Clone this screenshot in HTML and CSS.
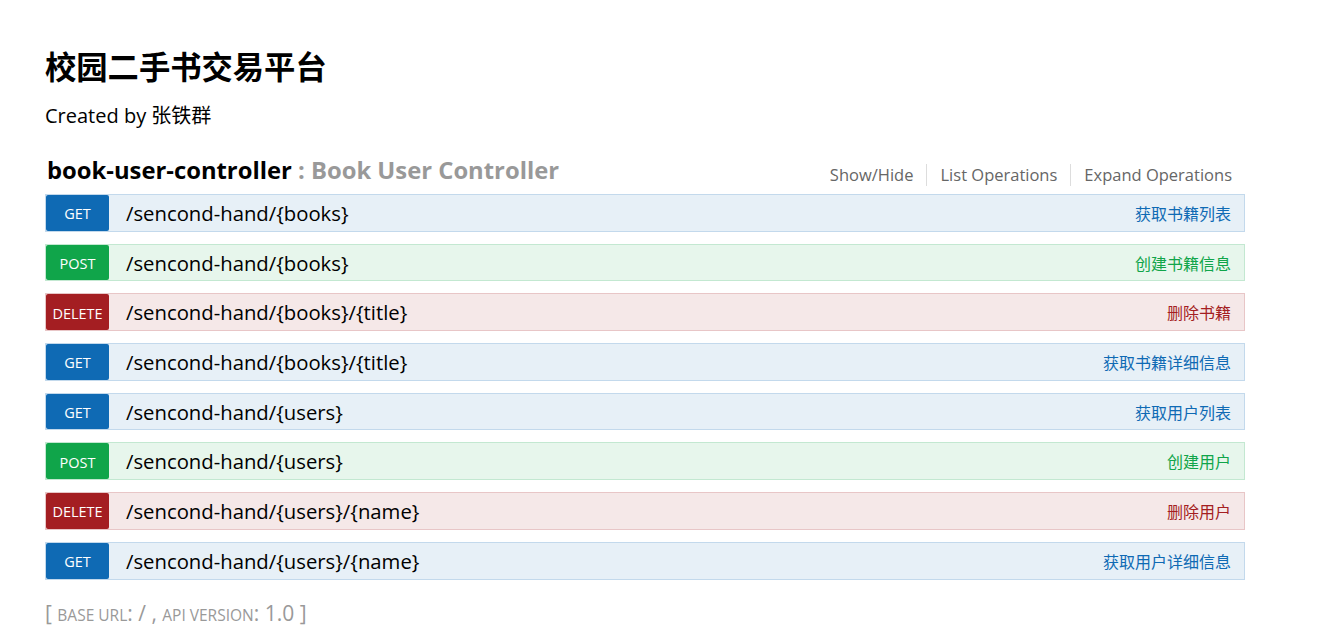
FILE: index.html
```html
<!DOCTYPE html>
<html lang="zh-CN">
<head>
<meta charset="utf-8">
<title>校园二手书交易平台</title>
<link rel="stylesheet" href="styles.css">
</head>
<body>
<div class="page">
  <div class="info">
    <h1 class="title">校园二手书交易平台</h1>
    <div class="created">Created by 张铁群</div>
  </div>
  <div class="resource">
    <div class="res-head">
      <h2 class="res-name">book-user-controller<span class="res-desc"> : Book User Controller</span></h2>
      <ul class="res-links">
        <li>Show/Hide</li>
        <li>List Operations</li>
        <li>Expand Operations</li>
      </ul>
    </div>
    <ul class="ops">
      <li class="op get"><span class="verb">GET</span><span class="path">/sencond-hand/{books}</span><span class="summary">获取书籍列表</span></li>
      <li class="op post"><span class="verb">POST</span><span class="path">/sencond-hand/{books}</span><span class="summary">创建书籍信息</span></li>
      <li class="op delete"><span class="verb">DELETE</span><span class="path">/sencond-hand/{books}/{title}</span><span class="summary">删除书籍</span></li>
      <li class="op get"><span class="verb">GET</span><span class="path">/sencond-hand/{books}/{title}</span><span class="summary">获取书籍详细信息</span></li>
      <li class="op get"><span class="verb">GET</span><span class="path">/sencond-hand/{users}</span><span class="summary">获取用户列表</span></li>
      <li class="op post"><span class="verb">POST</span><span class="path">/sencond-hand/{users}</span><span class="summary">创建用户</span></li>
      <li class="op delete"><span class="verb">DELETE</span><span class="path">/sencond-hand/{users}/{name}</span><span class="summary">删除用户</span></li>
      <li class="op get"><span class="verb">GET</span><span class="path">/sencond-hand/{users}/{name}</span><span class="summary">获取用户详细信息</span></li>
    </ul>
  </div>
  <div class="footer">[ <span class="sc">Base URL</span>: / , <span class="sc">Api Version</span>: 1.0 ]</div>
</div>
</body>
</html>
```

FILE: styles.css
```css
* { box-sizing: border-box; }
body {
  margin: 0;
  background: #fff;
  font-family: "Open Sans", "Noto Sans CJK SC", sans-serif;
  color: #000;
}
.page {
  width: 1200px;
  margin-left: 45px;
  padding-top: 42px;
}
.title {
  margin: 0;
  font-size: 31.3px;
  font-weight: bold;
  line-height: 48px;
  font-family: "Noto Sans CJK SC", sans-serif;
}
.created {
  margin-top: 11px;
  font-size: 20px;
  line-height: 30px;
}
.resource { margin-top: 21px; }
.res-head {
  display: flex;
  justify-content: space-between;
  align-items: flex-end;
  height: 42px;
  padding-bottom: 8px;
}
.res-name {
  margin: 0 0 0 2px;
  font-size: 23.8px;
  font-weight: bold;
  line-height: 32px;
}
.res-desc { color: #999; }
.res-links {
  list-style: none;
  margin: 0;
  padding: 0 13px 0 0;
  display: flex;
  font-size: 16.5px;
  color: #666;
  line-height: 22px;
}
.res-links li {
  padding: 0 13px;
  border-left: 1px solid #ddd;
}
.res-links li:first-child { border-left: none; }
.res-links li:last-child { padding-right: 0; }
.ops {
  list-style: none;
  margin: 0;
  padding: 0;
}
.op {
  display: flex;
  align-items: stretch;
  height: 37.7px;
  margin-bottom: 12px;
  border: 1px solid;
  padding: 0;
}
.verb {
  width: 63px;
  flex: none;
  display: flex;
  align-items: center;
  justify-content: center;
  color: #fff;
  font-size: 14.5px;
  border-radius: 2px;
  padding-top: 2px;
}
.path {
  flex: 1;
  display: flex;
  align-items: center;
  padding-left: 17px;
  font-size: 20.3px;
  color: #000;
}
.summary {
  display: flex;
  align-items: center;
  padding-right: 13px;
  font-size: 16px;
  font-family: "Noto Sans CJK SC", sans-serif;
}
.get { background: #e7f0f7; border-color: #c3d9ec; }
.get .verb { background: #0f6ab4; }
.get .summary { color: #0f6ab4; }
.post { background: #e7f6ec; border-color: #c3e8d1; }
.post .verb { background: #10a54a; }
.post .summary { color: #10a54a; }
.delete { background: #f5e8e8; border-color: #e8c6c7; }
.delete .verb { background: #a41e22; }
.delete .summary { color: #a41e22; }
.footer {
  margin-top: 19px;
  color: #999;
  font-size: 21px;
  line-height: 28px;
}
.sc {
  text-transform: uppercase;
  font-size: 15.5px;
}
```
